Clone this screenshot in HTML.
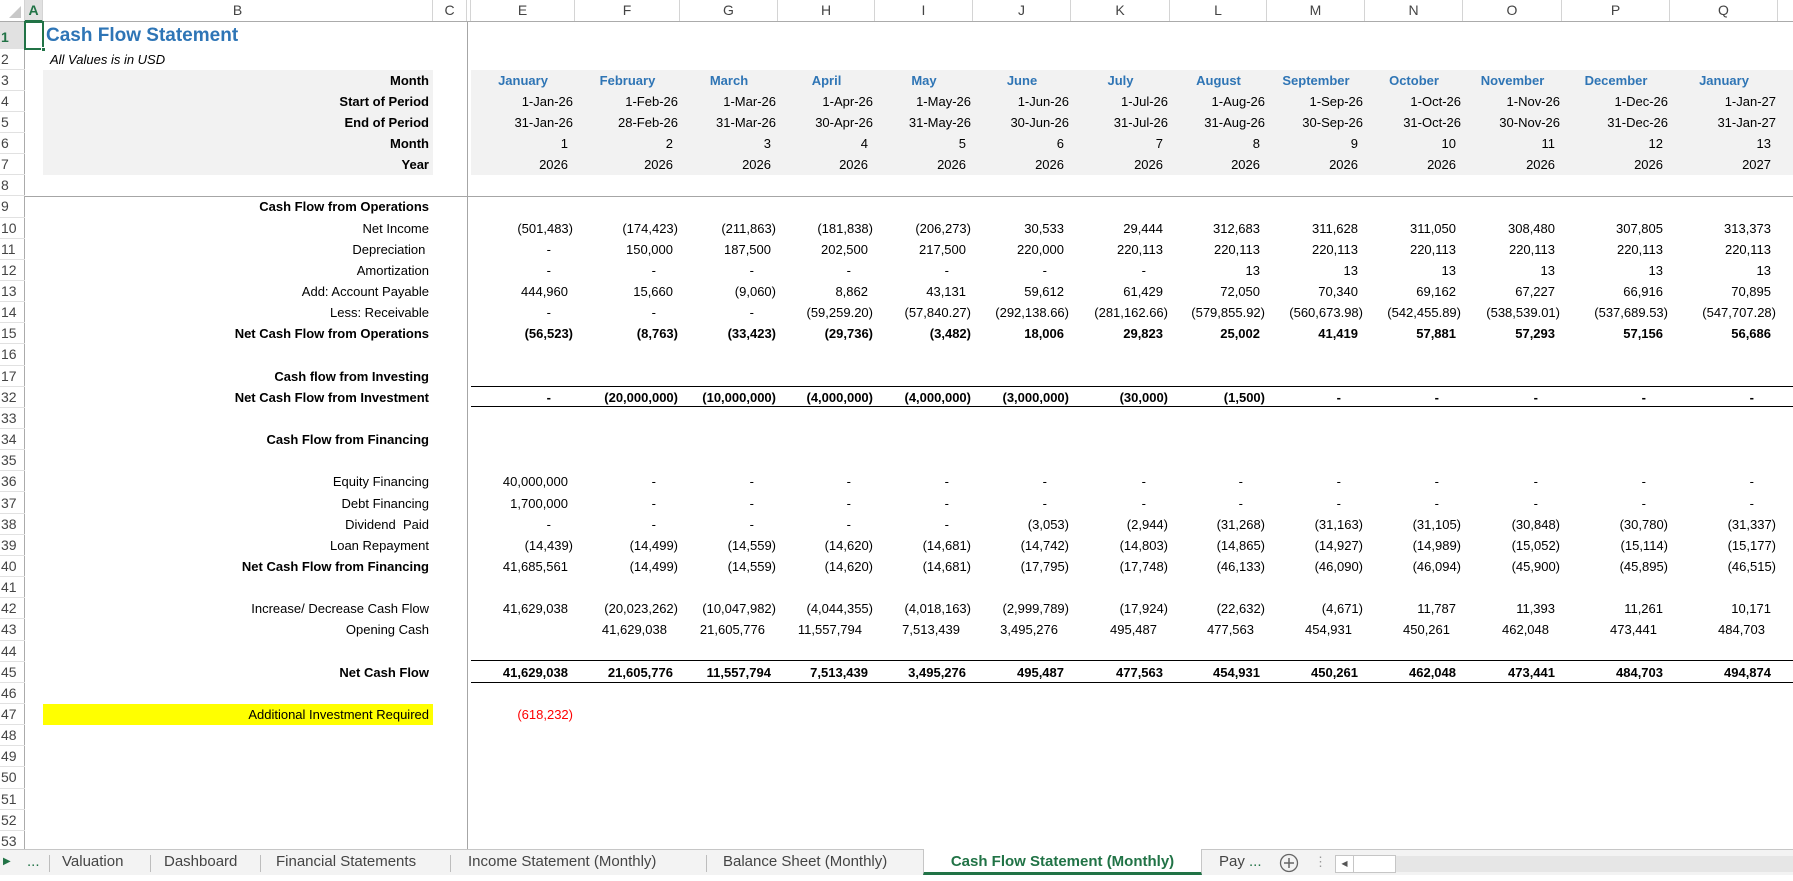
<!DOCTYPE html>
<html><head><meta charset="utf-8">
<style>
*{margin:0;padding:0;box-sizing:border-box}
body{width:1793px;height:875px;overflow:hidden;background:#fff;font-family:"Liberation Sans",Arial,sans-serif;font-size:13px;color:#000;position:relative}
.abs{position:absolute}
.colhdr{position:absolute;top:0;left:0;width:1793px;height:22px;border-bottom:1px solid #ababab;background:#fff}
.ch{position:absolute;top:0;height:21px;line-height:21px;text-align:center;color:#444;font-size:14px;border-right:1px solid #d4d4d4}
.rowhdr{position:absolute;left:0;top:22px;width:25px;height:827px;border-right:1px solid #ababab;background:#fff}
.rn{position:absolute;left:0;width:25px;height:21.15px;line-height:21px;padding-left:1px;color:#444;font-size:14px;border-bottom:1px solid #e1e1e1}
.r{position:absolute;left:0;width:1793px;height:21.15px;top:calc(69.5px + var(--i) * 21.15px);line-height:21px}
.l{position:absolute;left:43px;width:390px;text-align:right;padding-right:4px;white-space:nowrap}
.v{position:absolute;left:471px;display:flex;white-space:nowrap}
.v span{display:block;text-align:right;padding-right:7px}
.v span:nth-child(1){width:104px}.v span:nth-child(2){width:105px}.v span:nth-child(3){width:98px}.v span:nth-child(4){width:97px}
.v span:nth-child(5){width:98px}.v span:nth-child(6){width:98px}.v span:nth-child(7){width:99px}.v span:nth-child(8){width:97px}
.v span:nth-child(9){width:98px}.v span:nth-child(10){width:98px}.v span:nth-child(11){width:99px}.v span:nth-child(12){width:108px}.v span:nth-child(13){width:108px}
.v span.n{padding-right:2px}
.v span.d{padding-right:24px}
.v span.c{text-align:center;padding-right:0;color:#2f75b5;font-weight:bold}
.v span.o{padding-right:13px}
.b{font-weight:bold}
.gray{background:#f2f2f2}
.bl{border-top:1px solid #000;border-bottom:1px solid #000}
.tabs{position:absolute;left:0;top:849px;width:1793px;height:26px;background:#f3f3f3;border-top:1px solid #c6c6c6;font-size:15px;color:#444}
.tab{position:absolute;top:0;height:25px;line-height:24px;white-space:nowrap}
.sep{position:absolute;top:5px;width:1px;height:17px;background:#bdbdbd}
</style></head><body>

<div class="colhdr">
 <div class="abs" style="left:0;top:0;width:25px;height:21px;border-right:1px solid #d4d4d4"><svg width="25" height="21"><polygon points="21,6 21,18 9,18" fill="#c8c8c8"/></svg></div>
 <div class="ch" style="left:25px;width:18px;background:#e1e1e1;color:#217346;font-weight:bold;border-bottom:2px solid #217346;height:22px">A</div>
 <div class="ch" style="left:43px;width:390px">B</div>
 <div class="ch" style="left:433px;width:34px">C</div>
 <div class="ch" style="left:467px;width:4px"></div>
 <div class="ch" style="left:471px;width:104px">E</div>
 <div class="ch" style="left:575px;width:105px">F</div>
 <div class="ch" style="left:680px;width:98px">G</div>
 <div class="ch" style="left:778px;width:97px">H</div>
 <div class="ch" style="left:875px;width:98px">I</div>
 <div class="ch" style="left:973px;width:98px">J</div>
 <div class="ch" style="left:1071px;width:99px">K</div>
 <div class="ch" style="left:1170px;width:97px">L</div>
 <div class="ch" style="left:1267px;width:98px">M</div>
 <div class="ch" style="left:1365px;width:98px">N</div>
 <div class="ch" style="left:1463px;width:99px">O</div>
 <div class="ch" style="left:1562px;width:108px">P</div>
 <div class="ch" style="left:1670px;width:108px">Q</div>
</div>

<div class="rowhdr">
 <div class="rn" style="top:0;height:27px;line-height:30px;background:#e1e1e1;color:#217346;font-weight:bold">1</div>
 <div class="rn" style="top:27px;height:20.5px">2</div>
 <div class="rn" style="top:47.5px">3</div>
 <div class="rn" style="top:68.65px">4</div>
 <div class="rn" style="top:89.8px">5</div>
 <div class="rn" style="top:110.95px">6</div>
 <div class="rn" style="top:132.1px">7</div>
 <div class="rn" style="top:153.25px">8</div>
 <div class="rn" style="top:174.4px">9</div>
 <div class="rn" style="top:195.55px">10</div>
 <div class="rn" style="top:216.7px">11</div>
 <div class="rn" style="top:237.85px">12</div>
 <div class="rn" style="top:259px">13</div>
 <div class="rn" style="top:280.15px">14</div>
 <div class="rn" style="top:301.3px">15</div>
 <div class="rn" style="top:322.45px">16</div>
 <div class="rn" style="top:343.6px">17</div>
 <div class="rn" style="top:364.75px">32</div>
 <div class="rn" style="top:385.9px">33</div>
 <div class="rn" style="top:407.05px">34</div>
 <div class="rn" style="top:428.2px">35</div>
 <div class="rn" style="top:449.35px">36</div>
 <div class="rn" style="top:470.5px">37</div>
 <div class="rn" style="top:491.65px">38</div>
 <div class="rn" style="top:512.8px">39</div>
 <div class="rn" style="top:533.95px">40</div>
 <div class="rn" style="top:555.1px">41</div>
 <div class="rn" style="top:576.25px">42</div>
 <div class="rn" style="top:597.4px">43</div>
 <div class="rn" style="top:618.55px">44</div>
 <div class="rn" style="top:639.7px">45</div>
 <div class="rn" style="top:660.85px">46</div>
 <div class="rn" style="top:682px">47</div>
 <div class="rn" style="top:703.15px">48</div>
 <div class="rn" style="top:724.3px">49</div>
 <div class="rn" style="top:745.45px">50</div>
 <div class="rn" style="top:766.6px">51</div>
 <div class="rn" style="top:787.75px">52</div>
 <div class="rn" style="top:808.9px">53</div>
</div>

<div class="abs" style="left:467px;top:22px;width:1px;height:827px;background:#a6a6a6"></div>
<div class="abs" style="left:25px;top:195.5px;width:1768px;height:1px;background:#a6a6a6"></div>

<div class="abs" style="left:24px;top:21px;width:20px;height:29px;border:2px solid #217346"></div>
<div class="abs" style="left:41px;top:47px;width:5px;height:5px;background:#217346;border:1px solid #fff"></div>

<div class="abs b" style="left:46px;top:24px;font-size:19px;color:#2e75b6;line-height:24px">Cash Flow Statement</div>
<div class="abs" style="left:50px;top:51px;font-style:italic;line-height:18px">All Values is in USD</div>

<div class="abs gray" style="left:43px;top:69.5px;width:390px;height:105.75px"></div>
<div class="abs gray" style="left:471px;top:69.5px;width:1322px;height:105.75px"></div>

<div class="r b" style="--i:0"><div class="l">Month</div><div class="v"><span class="c">January</span><span class="c">February</span><span class="c">March</span><span class="c">April</span><span class="c">May</span><span class="c">June</span><span class="c">July</span><span class="c">August</span><span class="c">September</span><span class="c">October</span><span class="c">November</span><span class="c">December</span><span class="c">January</span></div></div>
<div class="r" style="--i:1"><div class="l b">Start of Period</div><div class="v"><span class="n">1-Jan-26</span><span class="n">1-Feb-26</span><span class="n">1-Mar-26</span><span class="n">1-Apr-26</span><span class="n">1-May-26</span><span class="n">1-Jun-26</span><span class="n">1-Jul-26</span><span class="n">1-Aug-26</span><span class="n">1-Sep-26</span><span class="n">1-Oct-26</span><span class="n">1-Nov-26</span><span class="n">1-Dec-26</span><span class="n">1-Jan-27</span></div></div>
<div class="r" style="--i:2"><div class="l b">End of Period</div><div class="v"><span class="n">31-Jan-26</span><span class="n">28-Feb-26</span><span class="n">31-Mar-26</span><span class="n">30-Apr-26</span><span class="n">31-May-26</span><span class="n">30-Jun-26</span><span class="n">31-Jul-26</span><span class="n">31-Aug-26</span><span class="n">30-Sep-26</span><span class="n">31-Oct-26</span><span class="n">30-Nov-26</span><span class="n">31-Dec-26</span><span class="n">31-Jan-27</span></div></div>
<div class="r" style="--i:3"><div class="l b">Month</div><div class="v"><span>1</span><span>2</span><span>3</span><span>4</span><span>5</span><span>6</span><span>7</span><span>8</span><span>9</span><span>10</span><span>11</span><span>12</span><span>13</span></div></div>
<div class="r" style="--i:4"><div class="l b">Year</div><div class="v"><span>2026</span><span>2026</span><span>2026</span><span>2026</span><span>2026</span><span>2026</span><span>2026</span><span>2026</span><span>2026</span><span>2026</span><span>2026</span><span>2026</span><span>2027</span></div></div>

<div class="r" style="--i:6"><div class="l b">Cash Flow from Operations</div></div>
<div class="r" style="--i:7"><div class="l">Net Income</div><div class="v"><span class="n">(501,483)</span><span class="n">(174,423)</span><span class="n">(211,863)</span><span class="n">(181,838)</span><span class="n">(206,273)</span><span>30,533</span><span>29,444</span><span>312,683</span><span>311,628</span><span>311,050</span><span>308,480</span><span>307,805</span><span>313,373</span></div></div>
<div class="r" style="--i:8"><div class="l">Depreciation&nbsp;</div><div class="v"><span class="d">-</span><span>150,000</span><span>187,500</span><span>202,500</span><span>217,500</span><span>220,000</span><span>220,113</span><span>220,113</span><span>220,113</span><span>220,113</span><span>220,113</span><span>220,113</span><span>220,113</span></div></div>
<div class="r" style="--i:9"><div class="l">Amortization</div><div class="v"><span class="d">-</span><span class="d">-</span><span class="d">-</span><span class="d">-</span><span class="d">-</span><span class="d">-</span><span class="d">-</span><span>13</span><span>13</span><span>13</span><span>13</span><span>13</span><span>13</span></div></div>
<div class="r" style="--i:10"><div class="l">Add: Account Payable</div><div class="v"><span>444,960</span><span>15,660</span><span class="n">(9,060)</span><span>8,862</span><span>43,131</span><span>59,612</span><span>61,429</span><span>72,050</span><span>70,340</span><span>69,162</span><span>67,227</span><span>66,916</span><span>70,895</span></div></div>
<div class="r" style="--i:11"><div class="l">Less: Receivable</div><div class="v"><span class="d">-</span><span class="d">-</span><span class="d">-</span><span class="n">(59,259.20)</span><span class="n">(57,840.27)</span><span class="n">(292,138.66)</span><span class="n">(281,162.66)</span><span class="n">(579,855.92)</span><span class="n">(560,673.98)</span><span class="n">(542,455.89)</span><span class="n">(538,539.01)</span><span class="n">(537,689.53)</span><span class="n">(547,707.28)</span></div></div>
<div class="r b" style="--i:12"><div class="l">Net Cash Flow from Operations</div><div class="v"><span class="n">(56,523)</span><span class="n">(8,763)</span><span class="n">(33,423)</span><span class="n">(29,736)</span><span class="n">(3,482)</span><span>18,006</span><span>29,823</span><span>25,002</span><span>41,419</span><span>57,881</span><span>57,293</span><span>57,156</span><span>56,686</span></div></div>

<div class="r b" style="--i:14"><div class="l">Cash flow from Investing</div></div>
<div class="abs bl" style="left:471px;top:385.5px;width:1322px;height:21.5px"></div>
<div class="r b" style="--i:15"><div class="l">Net Cash Flow from Investment</div><div class="v"><span class="d">-</span><span class="n">(20,000,000)</span><span class="n">(10,000,000)</span><span class="n">(4,000,000)</span><span class="n">(4,000,000)</span><span class="n">(3,000,000)</span><span class="n">(30,000)</span><span class="n">(1,500)</span><span class="d">-</span><span class="d">-</span><span class="d">-</span><span class="d">-</span><span class="d">-</span></div></div>

<div class="r b" style="--i:17"><div class="l">Cash Flow from Financing</div></div>
<div class="r" style="--i:19"><div class="l">Equity Financing</div><div class="v"><span>40,000,000</span><span class="d">-</span><span class="d">-</span><span class="d">-</span><span class="d">-</span><span class="d">-</span><span class="d">-</span><span class="d">-</span><span class="d">-</span><span class="d">-</span><span class="d">-</span><span class="d">-</span><span class="d">-</span></div></div>
<div class="r" style="--i:20"><div class="l">Debt Financing</div><div class="v"><span>1,700,000</span><span class="d">-</span><span class="d">-</span><span class="d">-</span><span class="d">-</span><span class="d">-</span><span class="d">-</span><span class="d">-</span><span class="d">-</span><span class="d">-</span><span class="d">-</span><span class="d">-</span><span class="d">-</span></div></div>
<div class="r" style="--i:21"><div class="l">Dividend&nbsp; Paid</div><div class="v"><span class="d">-</span><span class="d">-</span><span class="d">-</span><span class="d">-</span><span class="d">-</span><span class="n">(3,053)</span><span class="n">(2,944)</span><span class="n">(31,268)</span><span class="n">(31,163)</span><span class="n">(31,105)</span><span class="n">(30,848)</span><span class="n">(30,780)</span><span class="n">(31,337)</span></div></div>
<div class="r" style="--i:22"><div class="l">Loan Repayment</div><div class="v"><span class="n">(14,439)</span><span class="n">(14,499)</span><span class="n">(14,559)</span><span class="n">(14,620)</span><span class="n">(14,681)</span><span class="n">(14,742)</span><span class="n">(14,803)</span><span class="n">(14,865)</span><span class="n">(14,927)</span><span class="n">(14,989)</span><span class="n">(15,052)</span><span class="n">(15,114)</span><span class="n">(15,177)</span></div></div>
<div class="r" style="--i:23"><div class="l b">Net Cash Flow from Financing</div><div class="v"><span>41,685,561</span><span class="n">(14,499)</span><span class="n">(14,559)</span><span class="n">(14,620)</span><span class="n">(14,681)</span><span class="n">(17,795)</span><span class="n">(17,748)</span><span class="n">(46,133)</span><span class="n">(46,090)</span><span class="n">(46,094)</span><span class="n">(45,900)</span><span class="n">(45,895)</span><span class="n">(46,515)</span></div></div>

<div class="r" style="--i:25"><div class="l">Increase/ Decrease Cash Flow</div><div class="v"><span>41,629,038</span><span class="n">(20,023,262)</span><span class="n">(10,047,982)</span><span class="n">(4,044,355)</span><span class="n">(4,018,163)</span><span class="n">(2,999,789)</span><span class="n">(17,924)</span><span class="n">(22,632)</span><span class="n">(4,671)</span><span>11,787</span><span>11,393</span><span>11,261</span><span>10,171</span></div></div>
<div class="r" style="--i:26"><div class="l">Opening Cash</div><div class="v"><span class="o"></span><span class="o">41,629,038</span><span class="o">21,605,776</span><span class="o">11,557,794</span><span class="o">7,513,439</span><span class="o">3,495,276</span><span class="o">495,487</span><span class="o">477,563</span><span class="o">454,931</span><span class="o">450,261</span><span class="o">462,048</span><span class="o">473,441</span><span class="o">484,703</span></div></div>

<div class="abs bl" style="left:471px;top:660.2px;width:1322px;height:22.5px"></div>
<div class="r b" style="--i:28"><div class="l">Net Cash Flow</div><div class="v"><span>41,629,038</span><span>21,605,776</span><span>11,557,794</span><span>7,513,439</span><span>3,495,276</span><span>495,487</span><span>477,563</span><span>454,931</span><span>450,261</span><span>462,048</span><span>473,441</span><span>484,703</span><span>494,874</span></div></div>

<div class="abs" style="left:43px;top:704px;width:390px;height:21.15px;background:#ffff00"></div>
<div class="r" style="--i:30"><div class="l">Additional Investment Required</div><div class="v"><span class="n" style="color:#ff0000">(618,232)</span></div></div>

<div class="tabs">
 <div class="tab" style="left:3px;color:#217346;font-size:10px">&#9654;</div>
 <div class="tab" style="left:27px;color:#217346">...</div>
 <div class="sep" style="left:49px"></div>
 <div class="tab" style="left:62px">Valuation</div>
 <div class="sep" style="left:150px"></div>
 <div class="tab" style="left:164px">Dashboard</div>
 <div class="sep" style="left:260px"></div>
 <div class="tab" style="left:276px">Financial Statements</div>
 <div class="sep" style="left:450px"></div>
 <div class="tab" style="left:468px">Income Statement (Monthly)</div>
 <div class="sep" style="left:706px"></div>
 <div class="tab" style="left:723px">Balance Sheet (Monthly)</div>
 <div class="tab" style="left:923px;width:279px;top:-1px;height:26px;background:#fff;border-left:1px solid #c6c6c6;border-right:1px solid #c6c6c6;border-bottom:3px solid #217346;color:#217346;font-weight:bold;text-align:center;line-height:25px">Cash Flow Statement (Monthly)</div>
 <div class="tab" style="left:1219px">Pay <span style="color:#217346">...</span></div>
 <div class="tab" style="left:1279px;top:3px"><svg width="20" height="20"><circle cx="10" cy="10" r="8.5" fill="none" stroke="#666" stroke-width="1.3"/><path d="M10 5v10M5 10h10" stroke="#666" stroke-width="1.5"/></svg></div>
 <div class="tab" style="left:1314px;color:#999;font-size:13px">&#8942;</div>
 <div class="abs" style="left:1395px;top:6px;width:398px;height:16px;background:#e6e6e6"></div>
 <div class="abs" style="left:1335px;top:5px;width:61px;height:18px;border:1px solid #c6c6c6;background:#fff"><div style="position:absolute;left:0;top:0;width:18px;height:16px;border-right:1px solid #c6c6c6;font-size:8px;line-height:16px;text-align:center;color:#555">&#9664;</div></div>
</div>
</body></html>
